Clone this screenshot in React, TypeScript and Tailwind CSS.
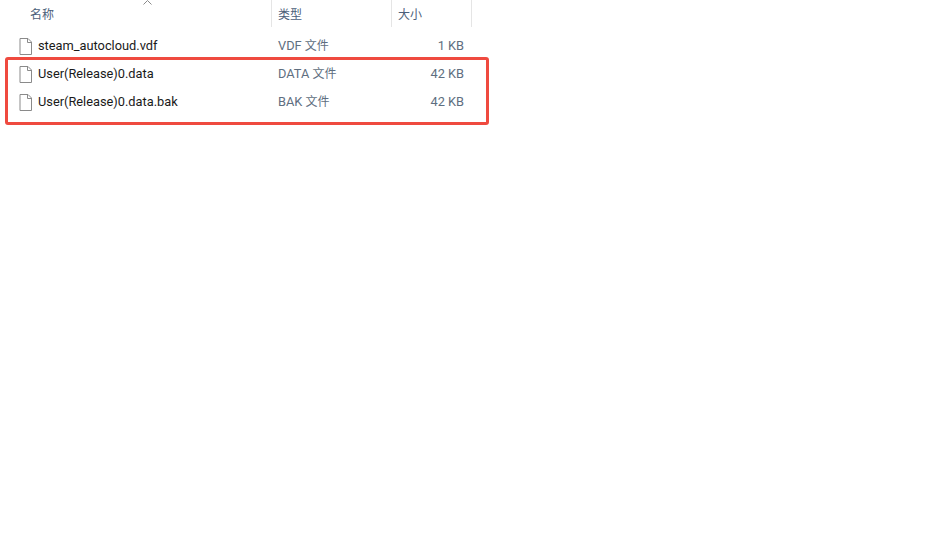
function FileIcon() {
  return (
    <svg width="14" height="17" viewBox="0 0 14 17" fill="none" className="shrink-0">
      <path d="M1 .5H9L12.5 4V16.5H1Z" fill="#fff" stroke="#8a8a8a" />
      <path d="M8.5 .5V4.5H12.5" stroke="#8a8a8a" />
    </svg>
  );
}

const rows = [
  { name: "steam_autocloud.vdf", type: "VDF", size: "1 KB" },
  { name: "User(Release)0.data", type: "DATA", size: "42 KB" },
  { name: "User(Release)0.data.bak", type: "BAK", size: "42 KB" },
];

export default function App() {
  return (
    <div className="relative h-[559px] w-[941px] overflow-hidden bg-white font-['Roboto','Noto_Sans_CJK_SC',sans-serif] text-[12.8px]">
      <div className="relative flex h-[27px] text-[12px] text-[#4c607a]">
        <svg width="10" height="5" viewBox="0 0 10 5" fill="none" className="absolute left-[143px] top-0">
          <path d="M.5 4.5 4.5 .5 8.5 4.5" stroke="#8a8a8a" />
        </svg>
        <div className="flex w-[272px] items-center border-r border-[#e5e5e5] pl-[30px] pt-[2px]">名称</div>
        <div className="flex w-[120px] items-center border-r border-[#e5e5e5] pl-[6px] pt-[2px]">类型</div>
        <div className="flex w-[80px] items-center border-r border-[#e5e5e5] pl-[6px] pt-[2px]">大小</div>
      </div>
      <div className="pt-[5px]">
        {rows.map((r) => (
          <div key={r.name} className="flex h-[28px] items-center">
            <div className="flex w-[272px] items-center gap-[5px] pl-[19px] text-[#1a1a1a]">
              <FileIcon />
              <span>{r.name}</span>
            </div>
            <div className="w-[120px] pl-[6px] text-[#5e6e80]">
              {r.type} <span className="text-[12px]">文件</span>
            </div>
            <div className="w-[72px] text-right text-[#5e6e80]">{r.size}</div>
          </div>
        ))}
      </div>
      <div className="absolute left-[5px] top-[57px] h-[68px] w-[484px] rounded-[3px] border-[3px] border-[#ef4a3f]" />
    </div>
  );
}
